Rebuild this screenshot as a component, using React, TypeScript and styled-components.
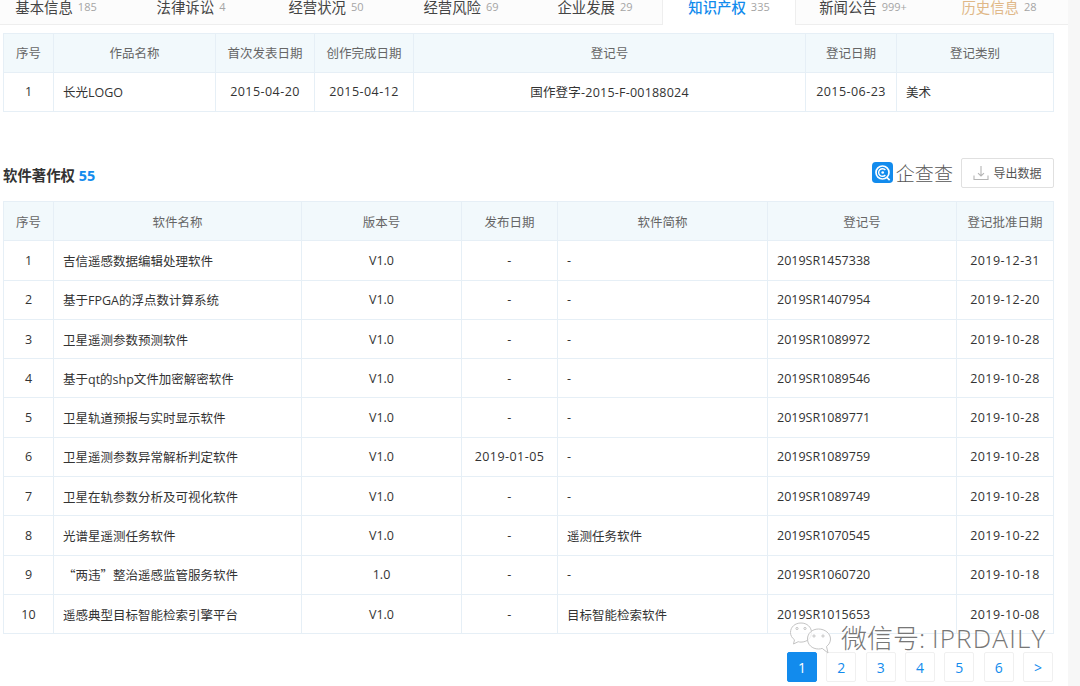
import React from 'react';
import styled, { createGlobalStyle } from 'styled-components';

const tabs = [
  { name: '基本信息', count: '185', width: 124 },
  { name: '法律诉讼', count: '4', width: 134 },
  { name: '经营状况', count: '50', width: 136 },
  { name: '经营风险', count: '69', width: 134 },
  { name: '企业发展', count: '29', width: 134 },
  { name: '知识产权', count: '335', width: 134, active: true },
  { name: '新闻公告', count: '999+', width: 134 },
  { name: '历史信息', count: '28', width: 138, history: true },
];

const software = [
  ['吉信遥感数据编辑处理软件', 'V1.0', '-', '-', '2019SR1457338', '2019-12-31'],
  ['基于FPGA的浮点数计算系统', 'V1.0', '-', '-', '2019SR1407954', '2019-12-20'],
  ['卫星遥测参数预测软件', 'V1.0', '-', '-', '2019SR1089972', '2019-10-28'],
  ['基于qt的shp文件加密解密软件', 'V1.0', '-', '-', '2019SR1089546', '2019-10-28'],
  ['卫星轨道预报与实时显示软件', 'V1.0', '-', '-', '2019SR1089771', '2019-10-28'],
  ['卫星遥测参数异常解析判定软件', 'V1.0', '2019-01-05', '-', '2019SR1089759', '2019-10-28'],
  ['卫星在轨参数分析及可视化软件', 'V1.0', '-', '-', '2019SR1089749', '2019-10-28'],
  ['光谱星遥测任务软件', 'V1.0', '-', '遥测任务软件', '2019SR1070545', '2019-10-22'],
  ['“两违”整治遥感监管服务软件', '1.0', '-', '-', '2019SR1060720', '2019-10-18'],
  ['遥感典型目标智能检索引擎平台', 'V1.0', '-', '目标智能检索软件', '2019SR1015653', '2019-10-08'],
];

const pages = ['1', '2', '3', '4', '5', '6', '>'];

const App: React.FC = () => (
  <Page>
    <GlobalStyle />
    <Main>
      <TabBar>
        {tabs.map((t) => (
          <Tab key={t.name} $width={t.width} $active={t.active}>
            <TabName $active={t.active} $history={t.history}>{t.name}</TabName>
            <TabCount>{t.count}</TabCount>
          </Tab>
        ))}
      </TabBar>

      <Table $rowHeight={38.8}>
        <colgroup>
          {[50, 162, 99, 99, 392, 91, 157].map((w, i) => <col key={i} width={w} />)}
        </colgroup>
        <thead>
          <tr>
            <Th>序号</Th><Th>作品名称</Th><Th>首次发表日期</Th><Th>创作完成日期</Th><Th>登记号</Th><Th>登记日期</Th><Th>登记类别</Th>
          </tr>
        </thead>
        <tbody>
          <tr>
            <Td $center>1</Td><Td>长光LOGO</Td><Td $center $spacing={0.45}>2015-04-20</Td><Td $center $spacing={0.45}>2015-04-12</Td>
            <Td $center $spacing={0.22}>国作登字-2015-F-00188024</Td><Td $center $spacing={0.45}>2015-06-23</Td><Td>美术</Td>
          </tr>
        </tbody>
      </Table>

      <SectionHead>
        <SectionTitle>软件著作权 <SectionCount>55</SectionCount></SectionTitle>
        <SectionTools>
          <Logo>
            <svg width="21" height="21" viewBox="0 0 22 22">
              <rect width="22" height="22" rx="4" fill="#128bed" />
              <circle cx="11" cy="11" r="6.8" fill="none" stroke="#fff" strokeWidth="1.8" />
              <path d="M14 8.400a4 4 0 1 0 0 5.200" fill="none" stroke="#fff" strokeWidth="1.500" />
              <circle cx="11.200" cy="11" r="1.400" fill="#fff" />
              <path d="M15.500 16l3 3" stroke="#fff" strokeWidth="1.800" />
            </svg>
            <LogoText>企查查</LogoText>
          </Logo>
          <ExportButton>
            <svg width="16" height="16" viewBox="0 0 16 16" fill="none" stroke="#b5b5b5" strokeWidth="1.100">
              <path d="M8 1v10M5 8.200L8 11l3-2.800M1 10.500v4h14v-4" />
            </svg>
            导出数据
          </ExportButton>
        </SectionTools>
      </SectionHead>

      <Table $rowHeight={39.3}>
        <colgroup>
          {[50, 248, 160, 96, 210, 189, 97].map((w, i) => <col key={i} width={w} />)}
        </colgroup>
        <thead>
          <tr>
            <Th>序号</Th><Th>软件名称</Th><Th>版本号</Th><Th>发布日期</Th><Th>软件简称</Th><Th>登记号</Th><Th>登记批准日期</Th>
          </tr>
        </thead>
        <tbody>
          {software.map((row, i) => (
            <tr key={row[4]}>
              <Td $center>{i + 1}</Td>
              <Td $cjk={row[0].includes('“')}>{row[0]}</Td>
              <Td $center>{row[1]}</Td>
              <Td $center $spacing={0.45}>{row[2]}</Td>
              <Td>{row[3]}</Td>
              <Td>{row[4]}</Td>
              <Td $center $spacing={0.45}>{row[5]}</Td>
            </tr>
          ))}
        </tbody>
      </Table>

      <Pager>
        {pages.map((p, i) => <PageButton key={p} $active={i === 0}>{p}</PageButton>)}
      </Pager>
    </Main>

    <Watermark>
      <svg width="42" height="33" viewBox="0 0 42 33" fill="#fff" fillOpacity="0.75" stroke="#c4c4c4" strokeWidth="1">
        <path d="M11 1C5 1 .5 5 .5 10.500c0 3 1.500 5.500 4 7.300L3.500 22l4.700-2.300c1 .3 1.800.4 2.800.4 6 0 10.500-4 10.500-9.500S17 1 11 1z" />
        <path d="M28.500 7C22 7 17.500 11.500 17.500 17s4.500 10 11 10c1.300 0 2.500-.2 3.700-.6L38 31l-1.500-6.500c2.500-1.800 4-4.500 4-7.500 0-5.500-5.500-10-12-10z" />
        <circle cx="7" cy="6.500" r="1.100" />
        <circle cx="15" cy="6.500" r="1.100" />
        <circle cx="24" cy="14" r="1.100" />
        <circle cx="33" cy="14" r="1.100" />
      </svg>
      <WatermarkText>微信号: <WatermarkLatin>IPRDAILY</WatermarkLatin></WatermarkText>
    </Watermark>
  </Page>
);

const GlobalStyle = createGlobalStyle`
  html, body {
    margin: 0;
    padding: 0;
    background: #fff;
  }
  body {
    font-family: "Open Sans", "Noto Sans CJK SC", sans-serif;
    color: #333;
  }
`;

const Page = styled.div`
  position: relative;
  width: 1080px;
  height: 686px;
  overflow: hidden;
  background: #f7f7f7;
`;

const Main = styled.div`
  width: 1068px;
  height: 686px;
  background: #fff;
  padding-left: 3px;
  box-sizing: border-box;
`;

const TabBar = styled.div`
  display: flex;
  height: 25px;
  margin: 0 0 8px -3px;
  background: #fcfcfc;
  border-bottom: 1px solid #eee;
  box-sizing: border-box;
`;

const Tab = styled.div<{ $width: number; $active?: boolean }>`
  width: ${(p) => p.$width}px;
  height: 25px;
  padding-bottom: 13px;
  box-sizing: border-box;
  display: flex;
  align-items: center;
  justify-content: center;
  gap: 5px;
  background: ${(p) => (p.$active ? '#fff' : 'transparent')};
  border-left: ${(p) => (p.$active ? '1px solid #eee' : 'none')};
  border-right: ${(p) => (p.$active ? '1px solid #eee' : 'none')};

  &:first-child {
    padding-right: 12px;
  }
`;

const TabName = styled.span<{ $active?: boolean; $history?: boolean }>`
  font-size: 14.4px;
  color: ${(p) => (p.$active ? '#128bed' : p.$history ? '#e0b888' : '#444')};
  font-weight: ${(p) => (p.$active ? 500 : 400)};
`;

const TabCount = styled.span`
  font-size: 11px;
  color: #a5a5a5;
`;

const Table = styled.table<{ $rowHeight: number }>`
  width: 1050px;
  table-layout: fixed;
  border-collapse: collapse;
  font-size: 12.5px;

  th,
  td {
    height: ${(p) => p.$rowHeight}px;
  }
`;

const Th = styled.th`
  box-sizing: border-box;
  padding: 0;
  background: #f2f9fc;
  border: 1px solid #e6eff6;
  font-weight: 400;
  color: #666;
  text-align: center;
`;

const Td = styled.td<{ $center?: boolean; $spacing?: number; $cjk?: boolean }>`
  box-sizing: border-box;
  padding: 0 9px;
  border: 1px solid #e6eff6;
  color: #333;
  text-align: ${(p) => (p.$center ? 'center' : 'left')};
  white-space: nowrap;
  letter-spacing: ${(p) => p.$spacing ?? 0}px;
  ${(p) => p.$cjk && 'font-family: "Noto Sans CJK SC", sans-serif;'}
`;

const SectionHead = styled.div`
  display: flex;
  justify-content: space-between;
  align-items: center;
  width: 1051px;
  height: 30px;
  margin: 46.4px 0 13px;
`;

const SectionTitle = styled.div`
  font-size: 14.4px;
  font-weight: 700;
  color: #333;
  padding-top: 4px;
`;

const SectionCount = styled.span`
  color: #128bed;
`;

const SectionTools = styled.div`
  display: flex;
  align-items: center;
  gap: 8px;
`;

const Logo = styled.div`
  display: flex;
  align-items: center;
  gap: 3px;
`;

const LogoText = styled.span`
  font-size: 19px;
  font-weight: 300;
  color: #555;
  letter-spacing: 0.1px;
`;

const ExportButton = styled.div`
  display: flex;
  align-items: center;
  justify-content: center;
  gap: 4px;
  width: 93px;
  height: 30px;
  box-sizing: border-box;
  border: 1px solid #e0e0e0;
  border-radius: 2px;
  font-size: 12px;
  color: #555;
`;

const Pager = styled.div`
  display: flex;
  justify-content: flex-end;
  gap: 9.33px;
  width: 1050px;
  margin-top: 18px;
`;

const PageButton = styled.div<{ $active?: boolean }>`
  width: 30px;
  height: 30px;
  box-sizing: border-box;
  display: flex;
  align-items: center;
  justify-content: center;
  border: 1px solid ${(p) => (p.$active ? '#128bed' : '#f0f0f0')};
  border-radius: 2px;
  background: ${(p) => (p.$active ? '#128bed' : '#fff')};
  color: ${(p) => (p.$active ? '#fff' : '#128bed')};
  font-size: 14px;
`;

const Watermark = styled.div`
  position: absolute;
  left: 790px;
  top: 622px;
  display: flex;
  align-items: center;
  gap: 9px;
`;

const WatermarkText = styled.span`
  font-size: 26px;
  font-weight: 300;
  line-height: 31px;
  color: #777;
  text-shadow: 1px 1px 0 rgba(255, 255, 255, 0.7);
  white-space: nowrap;
`;

const WatermarkLatin = styled.span`
  letter-spacing: 1.2px;
`;

export default App;
